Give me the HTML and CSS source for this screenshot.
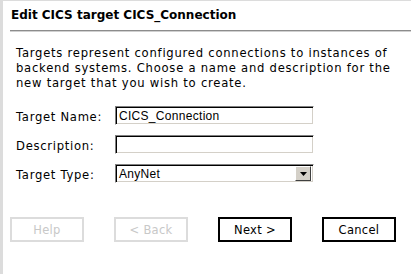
FILE: index.html
```html
<!DOCTYPE html>
<html>
<head>
<meta charset="utf-8">
<link rel="stylesheet" href="styles.css">
</head>
<body>
<div class="frame">
  <div class="header"><h1 class="title">Edit CICS target CICS_Connection</h1></div>
  <div class="rule"></div>
  <div class="content">
    <p class="intro">Targets represent configured connections to instances of backend systems. Choose a name and description for the new target that you wish to create.</p>
    <div class="form">
      <label class="label">Target Name:</label>
      <div class="field">CICS_Connection</div>
      <label class="label">Description:</label>
      <div class="field"></div>
      <label class="label">Target Type:</label>
      <div class="field select"><span class="sel-text">AnyNet</span><span class="arrow"><svg width="7" height="4" viewBox="0 0 7 4"><path d="M0 0h7L3.5 4z" fill="#000"/></svg></span></div>
    </div>
  </div>
  <div class="buttons">
    <div class="btn disabled">Help</div>
    <div class="btn disabled">&lt; Back</div>
    <div class="btn">Next &gt;</div>
    <div class="btn">Cancel</div>
  </div>
</div>
</body>
</html>
```
FILE: styles.css
```css
html, body {
  margin: 0;
  padding: 0;
  background: #fff;
}
body {
  width: 411px;
  height: 275px;
  overflow: hidden;
  font-family: "DejaVu Sans", Verdana, sans-serif;
  font-size: 11px;
  color: #000;
}
.frame {
  height: 274px;
  border-top: 1px solid #dcdcdc;
  border-left: 3px solid #dcdcdc;
  box-sizing: border-box;
}
.header {
  padding: 7px 0 0 8px;
  height: 23px;
  box-sizing: border-box;
}
.title {
  margin: 0;
  font-size: 12px;
  font-weight: bold;
  line-height: 15px;
}
.rule {
  margin: 6px 0 0 7px;
  height: 1px;
  background: #8c8c8c;
  border-bottom: 1px solid #d0d0d0;
}
.content {
  padding: 14px 0 0 13px;
}
.intro {
  margin: 0;
  width: 395px;
  line-height: 15px;
  font-size: 11.6px;
  letter-spacing: 0.75px;
}
.form {
  margin-top: 15px;
  display: grid;
  grid-template-columns: 99px 199px;
  row-gap: 10px;
  align-items: center;
}
.label {
  line-height: 19px;
  padding-top: 2px;
  margin-bottom: -2px;
  font-size: 11.6px;
  letter-spacing: 0.7px;
}
.field {
  height: 19px;
  box-sizing: border-box;
  border: 1px solid;
  border-color: #808080 #fff #fff #808080;
  box-shadow: inset 1px 1px 0 #000, inset -1px -1px 0 #d4d0c8;
  padding: 2px 0 0 3px;
  font-size: 12px;
  letter-spacing: 0.3px;
  line-height: 14px;
  font-family: "Liberation Sans", Arial, sans-serif;
}
.select {
  display: flex;
  padding: 2px 2px 2px 3px;
}
.sel-text {
  flex: 1;
}
.arrow {
  width: 16px;
  height: 15px;
  margin-top: -1px;
  box-sizing: border-box;
  background: #d4d0c8;
  border: 1px solid;
  border-color: #fff #404040 #404040 #fff;
  display: flex;
  align-items: center;
  justify-content: center;
}
.buttons {
  margin-top: 34px;
  padding-left: 7px;
  display: flex;
  gap: 30px;
}
.btn {
  width: 74px;
  height: 25px;
  box-sizing: border-box;
  border: 2px solid #000;
  display: flex;
  align-items: center;
  justify-content: center;
  font-size: 11.5px;
  letter-spacing: 0.3px;
}
.btn.disabled {
  border-color: #dcdcdc;
  color: #c8c8c8;
}
```
